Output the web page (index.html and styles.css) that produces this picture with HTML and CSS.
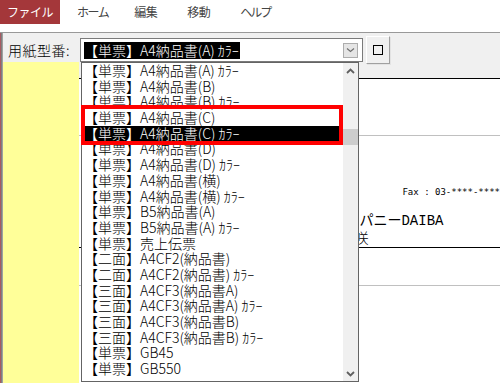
FILE: index.html
```html
<!DOCTYPE html>
<html lang="ja">
<head>
<meta charset="utf-8">
<title>用紙型番</title>
<link rel="stylesheet" href="styles.css">
</head>
<body>
<div class="app">
  <nav class="tabs">
    <span class="tab tab-file">ファイル</span>
    <span class="tab tab-home">ホーム</span>
    <span class="tab tab-edit">編集</span>
    <span class="tab tab-move">移動</span>
    <span class="tab tab-help">ヘルプ</span>
  </nav>
  <div class="ribbon-gap"></div>
  <main class="main">
    <div class="toolbar">
      <label class="field-label">用紙型番:</label>
      <div class="combo">
        <span class="combo-value">【単票】A4納品書(A) ｶﾗｰ</span>
        <span class="combo-btn">
          <svg width="9" height="6" viewBox="0 0 9 6"><polyline points="1,1.5 4.5,4.5 8,1.5" fill="none" stroke="#707070" stroke-width="1.2"/></svg>
        </span>
        <div class="dropdown">
          <ul class="options">
            <li>【単票】A4納品書(A) ｶﾗｰ</li>
            <li>【単票】A4納品書(B)</li>
            <li>【単票】A4納品書(B) ｶﾗｰ</li>
            <li>【単票】A4納品書(C)</li>
            <li class="selected">【単票】A4納品書(C) ｶﾗｰ</li>
            <li>【単票】A4納品書(D)</li>
            <li>【単票】A4納品書(D) ｶﾗｰ</li>
            <li>【単票】A4納品書(横)</li>
            <li>【単票】A4納品書(横) ｶﾗｰ</li>
            <li>【単票】B5納品書(A)</li>
            <li>【単票】B5納品書(A) ｶﾗｰ</li>
            <li>【単票】売上伝票</li>
            <li>【二面】A4CF2(納品書)</li>
            <li>【二面】A4CF2(納品書) ｶﾗｰ</li>
            <li>【三面】A4CF3(納品書A)</li>
            <li>【三面】A4CF3(納品書A) ｶﾗｰ</li>
            <li>【三面】A4CF3(納品書B)</li>
            <li>【三面】A4CF3(納品書B) ｶﾗｰ</li>
            <li>【単票】GB45</li>
            <li>【単票】GB550</li>
          </ul>
          <div class="scrollbar">
            <span class="sb-arrow">
              <svg width="9" height="6" viewBox="0 0 9 6"><polyline points="1,5 4.5,1.5 8,5" fill="none" stroke="#606060" stroke-width="1.8"/></svg>
            </span>
            <span class="sb-gap"></span>
            <span class="sb-thumb"></span>
            <span class="sb-fill"></span>
            <span class="sb-arrow">
              <svg width="9" height="6" viewBox="0 0 9 6"><polyline points="1,1 4.5,4.5 8,1" fill="none" stroke="#606060" stroke-width="1.8"/></svg>
            </span>
          </div>
          <div class="annot"></div>
        </div>
      </div>
      <button class="sq-btn" type="button"><span class="sq"></span></button>
    </div>
    <div class="content">
      <aside class="sidebar"></aside>
      <section class="doc">
        <div class="doc-head"></div>
        <div class="doc-sec1"></div>
        <div class="doc-sec2">
          <div class="fax">Fax : 03-****-****</div>
          <div class="name">株式会社カンパニーDAIBA</div>
          <div class="name2">咲</div>
        </div>
        <div class="doc-sec3"></div>
      </section>
    </div>
  </main>
</div>
</body>
</html>
```

FILE: styles.css
```css
* { box-sizing: border-box; }

html, body {
  margin: 0;
  padding: 0;
  width: 500px;
  height: 383px;
  overflow: hidden;
  background: #ffffff;
  font-family: "Noto Sans CJK JP", sans-serif;
}

.app {
  display: flex;
  flex-direction: column;
  height: 383px;
}

.tabs {
  display: flex;
  height: 24px;
  background: #ffffff;
  font-size: 12px;
  line-height: 24px;
  color: #444444;
}

.tab { white-space: nowrap; }

.tab-file {
  width: 60px;
  text-align: center;
  background: #a4373a;
  color: #ffffff;
  letter-spacing: -0.5px;
}

.tab-home { margin-left: 17px; letter-spacing: -1.5px; }
.tab-edit { margin-left: 26px; letter-spacing: -0.5px; }
.tab-move { margin-left: 30px; letter-spacing: -0.5px; }
.tab-help { margin-left: 30px; letter-spacing: -2px; }

.ribbon-gap { height: 8px; }

.main {
  flex: 1;
  display: flex;
  flex-direction: column;
  border-top: 1px solid #999999;
  padding-left: 3px;
  background: #f0f0f0;
  box-shadow: inset 1px 0 #a85a62, inset 2px 0 #7f7f7f, inset 3px 0 #a0a0a0;
}

.toolbar {
  display: flex;
  align-items: center;
  height: 29px;
  padding: 5px 0 0 5px;
}

.field-label {
  width: 72px;
  font-size: 14px;
  font-weight: 300;
  line-height: 20px;
  color: #000000;
  letter-spacing: 0.5px;
}

.combo {
  position: relative;
  display: flex;
  align-items: center;
  justify-content: space-between;
  width: 283px;
  height: 24px;
  padding: 0 4px 0 3px;
  background: #ffffff;
  border: 1px solid #7a7a7a;
}

.combo-value {
  height: 17px;
  line-height: 17px;
  font-size: 14px;
  font-weight: 300;
  padding-right: 1px;
  background: #000000;
  color: #ffffff;
  white-space: nowrap;
}

.combo-btn {
  display: flex;
  align-items: center;
  justify-content: center;
  width: 15px;
  height: 15px;
  background: #e5e5e5;
  border: 1px solid #adadad;
}

.dropdown {
  position: absolute;
  left: 0;
  top: 23px;
  z-index: 5;
  display: flex;
  width: 278px;
  height: 320px;
  background: #ffffff;
  border: 1px solid #646464;
}

.options {
  flex: 1;
  margin: 0;
  padding: 0;
  list-style: none;
  font-size: 14px;
  font-weight: 300;
  line-height: 15.7px;
  color: #000000;
}

.options li {
  height: 15.7px;
  padding-left: 2px;
  white-space: nowrap;
}

.options li.selected {
  background: #000000;
  color: #ffffff;
}

.scrollbar {
  display: flex;
  flex-direction: column;
  width: 15px;
  background: #f0f0f0;
}

.sb-arrow {
  display: flex;
  align-items: center;
  justify-content: center;
  height: 15px;
}

.sb-gap { height: 51px; }

.sb-thumb {
  height: 16px;
  background: #cdcdcd;
}

.sb-fill { flex: 1; }

.annot {
  position: absolute;
  left: -1px;
  top: 42px;
  width: 262px;
  height: 40px;
  border: 4px solid #ff0000;
}

.sq-btn {
  position: relative;
  z-index: 2;
  align-self: flex-start;
  display: flex;
  align-items: center;
  justify-content: center;
  width: 24px;
  height: 28px;
  margin: -2px 0 0 3px;
  padding: 0;
  background: #f0f0f0;
  border: 1px solid;
  border-color: #ffffff #a0a0a0 #a0a0a0 #ffffff;
  box-shadow: 1px 1px 0 #e3e3e3;
}

.sq {
  display: block;
  width: 10px;
  height: 10px;
  border: 1.5px solid #000000;
}

.content {
  flex: 1;
  display: flex;
}

.sidebar {
  width: 77px;
  background: #ffff99;
}

.doc {
  flex: 1;
  display: flex;
  flex-direction: column;
  background: #ffffff;
}

.doc-head {
  height: 17px;
  background: #f0f0f0;
  border-bottom: 1px solid #000000;
}

.doc-sec1 {
  height: 57px;
  border-bottom: 1px solid #c0c0c0;
}

.doc-sec2 {
  padding: 50px 0 2px 0;
  border-bottom: 1px solid #000000;
  white-space: nowrap;
  overflow: hidden;
}

.fax {
  padding-left: 323px;
  height: 12px;
  font-family: "DejaVu Sans Mono", monospace;
  font-size: 9px;
  line-height: 12px;
  color: #000000;
}

.name {
  margin-top: 15px;
  padding-left: 196px;
  font-family: "Liberation Mono", "Noto Sans CJK JP", monospace;
  font-size: 14px;
  line-height: 16px;
  color: #000000;
}

.name2 {
  padding-left: 275px;
  font-size: 14px;
  font-weight: 300;
  line-height: 16px;
  color: #000000;
}

.doc-sec3 {
  height: 38px;
  border-bottom: 1px solid #c0c0c0;
}
```
